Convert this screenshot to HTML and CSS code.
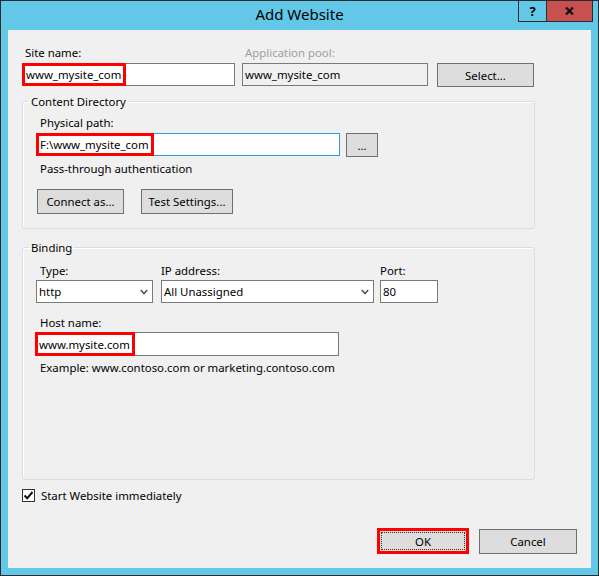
FILE: index.html
```html
<!DOCTYPE html>
<html lang="en">
<head>
  <meta charset="UTF-8">
  <title>Add Website</title>
  <link rel="stylesheet" href="styles.css">
</head>
<body>

<div class="window">
  <div class="titlebar">
    <span class="title">Add Website</span>
    <div class="caption">
      <div class="cap cap-help">?</div>
      <div class="cap cap-close">
        <svg width="9" height="8" viewBox="0 0 9 8">
          <path d="M1 0.5 L8 7.5 M8 0.5 L1 7.5" stroke="#111" stroke-width="2.2" fill="none"/>
        </svg>
      </div>
    </div>
  </div>

  <div class="client">
    <div class="top-row">
      <div class="col col-site">
        <div class="lbl">Site name:</div>
        <div class="field"><span class="mark mark-site">www_mysite_com</span></div>
      </div>
      <div class="col col-pool">
        <div class="lbl lbl-off">Application pool:</div>
        <div class="field field-off"><span class="val">www_mysite_com</span></div>
      </div>
      <div class="btn btn-select">Select...</div>
    </div>

    <fieldset class="group group-dir">
      <legend>Content Directory</legend>
      <div class="lbl lbl-in">Physical path:</div>
      <div class="path-row">
        <div class="field field-focus field-path"><span class="mark mark-path">F:\www_mysite_com</span></div>
        <div class="btn btn-browse">...</div>
      </div>
      <div class="lbl lbl-in pass">Pass-through authentication</div>
      <div class="btn-row">
        <div class="btn btn-connect">Connect as...</div>
        <div class="btn btn-test">Test Settings...</div>
      </div>
    </fieldset>

    <fieldset class="group group-bind">
      <legend>Binding</legend>
      <div class="bind-row">
        <div class="col col-type">
          <div class="lbl lbl-in">Type:</div>
          <div class="field combo">
            <span class="val">http</span>
            <svg class="chev" width="8" height="6" viewBox="0 0 8 6"><path d="M0.8 1 L4 4.5 L7.2 1" stroke="#555" stroke-width="1.6" fill="none"/></svg>
          </div>
        </div>
        <div class="col col-ip">
          <div class="lbl">IP address:</div>
          <div class="field combo">
            <span class="val">All Unassigned</span>
            <svg class="chev" width="8" height="6" viewBox="0 0 8 6"><path d="M0.8 1 L4 4.5 L7.2 1" stroke="#555" stroke-width="1.6" fill="none"/></svg>
          </div>
        </div>
        <div class="col col-port">
          <div class="lbl">Port:</div>
          <div class="field"><span class="val">80</span></div>
        </div>
      </div>
      <div class="lbl lbl-in host-lbl">Host name:</div>
      <div class="field field-host"><span class="mark mark-host">www.mysite.com</span></div>
      <div class="lbl lbl-in example">Example: www.contoso.com or marketing.contoso.com</div>
    </fieldset>

    <div class="check-row">
      <div class="checkbox">
        <svg width="11" height="11" viewBox="0 0 11 11"><path d="M1.5 5.5 L4.2 8.3 L9.5 2" stroke="#111" stroke-width="2" fill="none"/></svg>
      </div>
      <span>Start Website immediately</span>
    </div>

    <div class="footer">
      <div class="btn btn-ok"><span class="focus">OK</span></div>
      <div class="btn btn-cancel">Cancel</div>
    </div>
  </div>
</div>

</body>
</html>
```

FILE: styles.css
```css
* {
  box-sizing: border-box;
}

body {
  margin: 0;
  font-family: "Segoe UI", "Noto Sans", sans-serif;
  font-size: 11.4px;
  color: #000;
}

.window {
  width: 599px;
  height: 576px;
  border: 1px solid #2b2b2b;
  background-color: #63c7e8;
  display: flex;
  flex-direction: column;
}

/* title bar */
.titlebar {
  height: 29px;
  display: grid;
  grid-template-columns: 1fr auto 1fr;
}

.title {
  grid-column: 2;
  font-size: 15px;
  line-height: 27px;
}

.caption {
  grid-column: 3;
  justify-self: end;
  align-self: start;
  display: flex;
  margin-right: 5px;
}

.cap {
  height: 21px;
  border: 1px solid #2b2b2b;
  border-top: none;
  display: flex;
  align-items: center;
  justify-content: center;
}

.cap-help {
  width: 29px;
  font-weight: bold;
  font-size: 13px;
  background-color: #63c7e8;
}

.cap-close {
  width: 46px;
  border-left: none;
  background-color: #c75050;
}

/* client area */
.client {
  flex: 1;
  margin: 0 7px 7px;
  background-color: #f0f0f0;
  padding: 0 14px;
  display: flex;
  flex-direction: column;
}

.lbl {
  line-height: 15px;
  white-space: nowrap;
}

.lbl-off {
  color: #a0a0a0;
}

.field {
  height: 23px;
  border: 1px solid #7a7a7a;
  background-color: #fff;
  display: flex;
  align-items: center;
  white-space: nowrap;
}

.field-off {
  background-color: #f0f0f0;
}

.field-focus {
  border-color: #2f9ad8;
}

.val {
  padding-left: 2px;
}

/* red boxes around the entered values */
.mark {
  align-self: stretch;
  margin: -1px 0 -1px -1px;
  border: 3px solid #f00;
  display: flex;
  align-items: center;
  padding: 0 2px 0 1px;
}

.btn {
  height: 24px;
  border: 1px solid #707070;
  background-color: #dddddd;
  display: flex;
  align-items: center;
  justify-content: center;
  white-space: nowrap;
}

/* first row */
.top-row {
  display: flex;
  align-items: flex-start;
  margin-top: 15px;
}

.top-row .lbl {
  padding-left: 3px;
  margin-bottom: 3px;
}

.col-site {
  width: 213px;
}

.col-pool {
  width: 186px;
  margin-left: 7px;
}

.btn-select {
  width: 97px;
  margin-left: 9px;
  margin-top: 18px;
}

/* group boxes */
.group {
  width: 513px;
  margin: 7px 0 0;
  padding: 6px 13px 14px;
  border: 1px solid #d5dfe5;
  border-radius: 3px;
  box-shadow: inset 1px 1px 0 #fff;
  min-width: 0;
}

.group legend {
  padding: 0 2px;
  margin-left: -7px;
  line-height: 15px;
}

.lbl-in {
  padding-left: 4px;
}

.group-dir .lbl-in:first-of-type {
  margin-bottom: 3px;
}

.path-row {
  display: flex;
  align-items: flex-start;
}

.field-path {
  width: 304px;
}

.btn-browse {
  width: 32px;
  margin-left: 6px;
}

.pass {
  margin-top: 4px;
}

.btn-row {
  display: flex;
  margin-top: 13px;
}

.btn-connect {
  width: 87px;
  height: 25px;
  margin-left: 1px;
}

.btn-test {
  width: 92px;
  height: 25px;
  margin-left: 17px;
}

.group-bind {
  margin-top: 11px;
  height: 240px;
  padding-top: 8px;
}

.bind-row {
  display: flex;
}

.bind-row .lbl {
  margin-bottom: 2px;
}

.col-type {
  width: 117px;
}

.col-ip {
  width: 213px;
  margin-left: 8px;
}

.col-port {
  width: 58px;
  margin-left: 6px;
}

.combo {
  justify-content: space-between;
}

.chev {
  margin-right: 4px;
}

.host-lbl {
  margin-top: 12px;
  margin-bottom: 2px;
}

.field-host {
  width: 304px;
  height: 24px;
  margin-left: -1px;
}

.example {
  margin-top: 4px;
}

/* checkbox */
.check-row {
  display: flex;
  align-items: center;
  margin-top: 8px;
}

.checkbox {
  width: 13px;
  height: 13px;
  border: 1px solid #333;
  background-color: #fff;
  display: flex;
  align-items: center;
  justify-content: center;
  margin-right: 6px;
}

/* dialog buttons */
.footer {
  margin-top: auto;
  margin-bottom: 14px;
  display: flex;
  justify-content: flex-end;
  align-items: flex-end;
}

.btn-ok {
  width: 92px;
  height: 26px;
  border: 3px solid #f00;
  padding: 1px;
}

.focus {
  flex: 1;
  align-self: stretch;
  border: 1px dotted #333;
  display: flex;
  align-items: center;
  justify-content: center;
}

.btn-cancel {
  width: 98px;
  height: 25px;
  margin-left: 10px;
}
```
